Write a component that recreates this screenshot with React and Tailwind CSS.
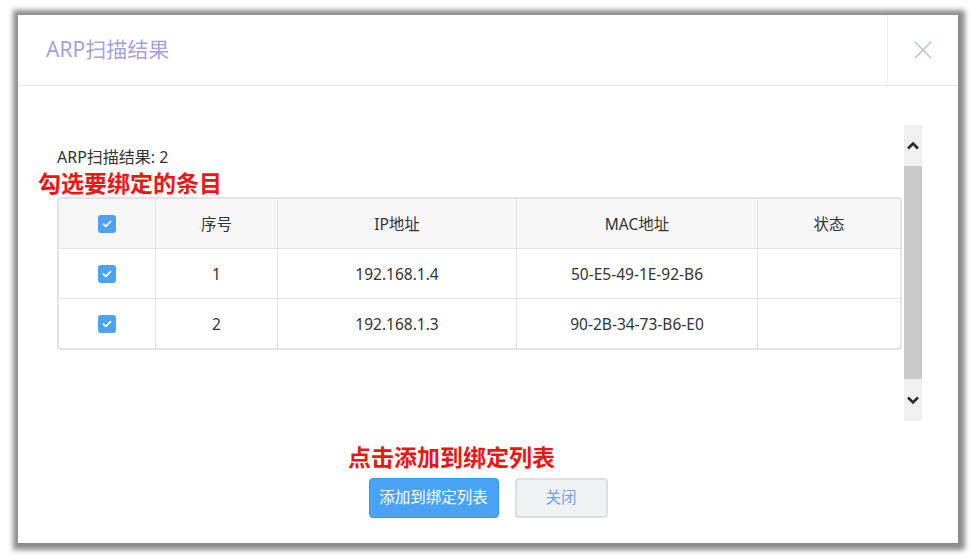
const font = { fontFamily: '"Noto Sans", "Noto Sans CJK SC", sans-serif' };

function Check() {
  return (
    <span className="inline-flex w-[18px] h-[18px] items-center justify-center rounded-[3px] bg-[#4da2f2]">
      <svg className="w-3 h-3" viewBox="0 0 12 12" fill="none">
        <path d="M2.5 6.2l2.3 2.2 4.7-4.8" stroke="#fff" strokeWidth="1.8" strokeLinecap="round" strokeLinejoin="round" />
      </svg>
    </span>
  );
}

const rows = [
  { no: 1, ip: "192.168.1.4", mac: "50-E5-49-1E-92-B6" },
  { no: 2, ip: "192.168.1.3", mac: "90-2B-34-73-B6-E0" },
];

function Row({ head, cells }) {
  return (
    <div className={`flex text-[15.5px] text-[#333] ${head ? "h-[49px] bg-[#f7f7f7]" : "h-[50px] border-t border-[#e3e3e3]"}`}>
      <div className="w-[96px] flex items-center justify-center">{cells[0]}</div>
      <div className="w-[122px] flex items-center justify-center pt-[2px] border-l border-[#e3e3e3]">{cells[1]}</div>
      <div className="w-[239px] flex items-center justify-center pt-[2px] border-l border-[#e3e3e3]">{cells[2]}</div>
      <div className="w-[241px] flex items-center justify-center pt-[2px] border-l border-[#e3e3e3]">{cells[3]}</div>
      <div className="flex-1 flex items-center justify-center pt-[2px] border-l border-[#e3e3e3]">{cells[4]}</div>
    </div>
  );
}

export default function App() {
  return (
    <div className="w-[977px] h-[557px] bg-white pt-[15px] pl-[18px] overflow-hidden" style={font}>
      <div className="w-[940px] h-[528px] bg-white shadow-[1px_1px_5px_6px_rgba(0,0,0,0.45)] flex flex-col">
        {/* header */}
        <div className="h-[71px] flex border-b border-[#e8e8e8]">
          <div className="flex-1 flex items-center pl-[28px] text-[21px] text-[#a79fe3]">ARP扫描结果</div>
          <div className="w-[71px] flex items-center justify-center border-l border-[#ececec]">
            <svg className="w-[20px] h-[20px]" viewBox="0 0 20 20" fill="none">
              <path d="M2 2l16 16M18 2L2 18" stroke="#b9c4cc" strokeWidth="1.6" />
            </svg>
          </div>
        </div>

        {/* body */}
        <div className="mt-[39px] flex h-[296px] pl-[20px]">
          <div className="flex-1 pt-[21px]">
            <div className="pl-[19px] text-[16px] leading-[22px] text-[#333]">ARP扫描结果: 2</div>
            <div className="mt-[1px] text-[23px] leading-[28px] font-bold text-[#f01414]">勾选要绑定的条目</div>
            <div className="ml-[19px] mr-[2px] border-2 border-[#e3e3e3] rounded-[4px] overflow-hidden">
              <Row head cells={[<Check />, "序号", "IP地址", "MAC地址", "状态"]} />
              {rows.map((r) => (
                <Row key={r.no} cells={[<Check />, r.no, r.ip, r.mac, ""]} />
              ))}
            </div>
          </div>
          <div className="w-[18px] mr-[36px] flex flex-col bg-[#f0f0f0]">
            <div className="h-[41px] flex items-center justify-center">
              <svg className="w-[14px] h-[10px]" viewBox="0 0 14 10" fill="none">
                <path d="M2 7.5L7 2.5l5 5" stroke="#2a2a2a" strokeWidth="2.6" />
              </svg>
            </div>
            <div className="flex-1 bg-[#c9c9c9]" />
            <div className="h-[42px] flex items-center justify-center">
              <svg className="w-[14px] h-[10px]" viewBox="0 0 14 10" fill="none">
                <path d="M2 2.5L7 7.5l5-5" stroke="#2a2a2a" strokeWidth="2.6" />
              </svg>
            </div>
          </div>
        </div>

        {/* footer */}
        <div className="mt-[21px] pl-[330px] text-[23px] leading-[30px] font-bold text-[#f01414]">点击添加到绑定列表</div>
        <div className="mt-[6px] flex justify-center gap-[16px]">
          <button className="w-[130px] h-[40px] rounded-[4px] bg-[#4aa3f7] border border-[#3b94e6] text-white text-[15.5px]">添加到绑定列表</button>
          <button className="w-[93px] h-[40px] rounded-[4px] bg-[#f0f1f3] border-2 border-[#dcdee1] text-[#6fa3e2] text-[15.5px]">关闭</button>
        </div>
      </div>
    </div>
  );
}
